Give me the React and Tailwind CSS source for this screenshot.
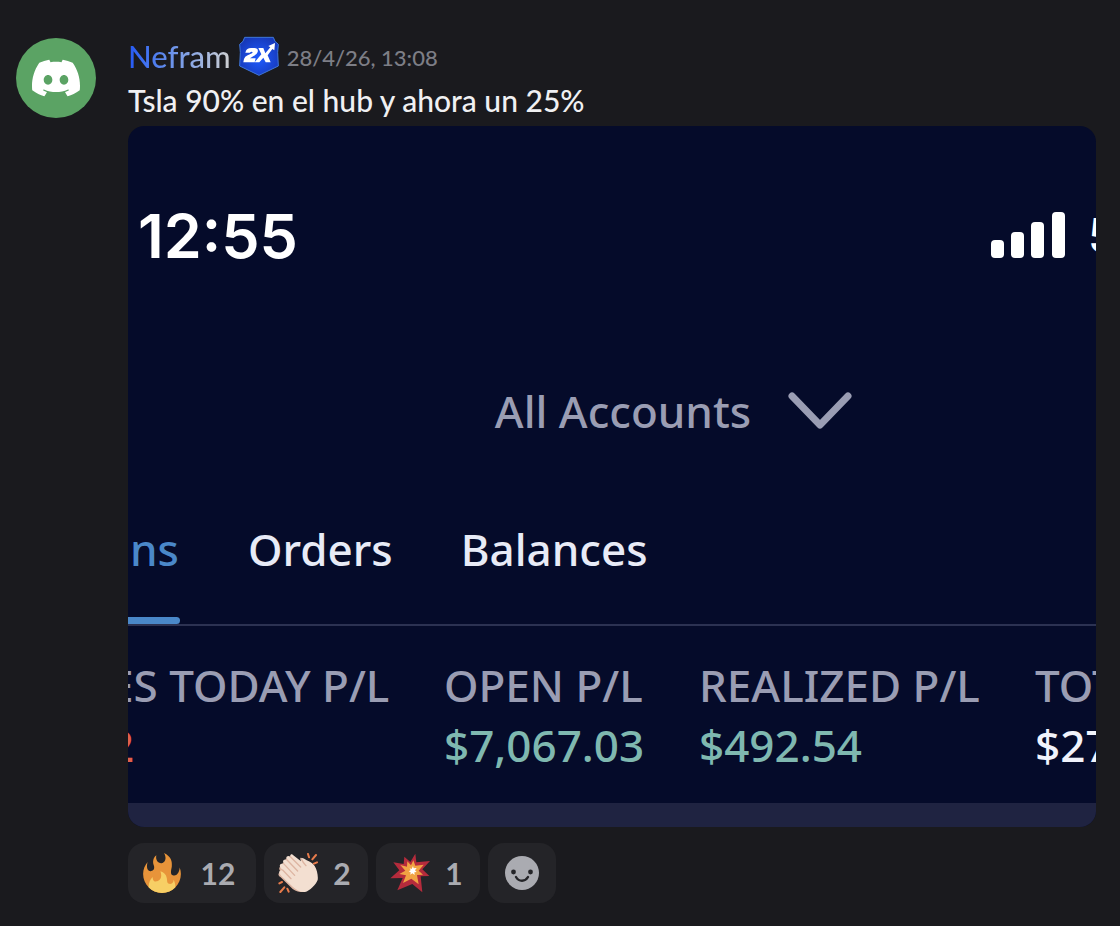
import React from "react";
import { SiDiscord } from "react-icons/si";

const reactions = [
  { name: "fire", count: 12, Icon: FireIcon },
  { name: "clap", count: 2, Icon: ClapIcon },
  { name: "boom", count: 1, Icon: BoomIcon },
];

// Columns of the positions summary
const columns = [
  { label: "ES TODAY P/L", value: "2", color: "text-[#e0604c]", width: "w-[335px]" },
  { label: "OPEN P/L", value: "$7,067.03", color: "text-[#7fb8b0]", width: "w-[255px]" },
  { label: "REALIZED P/L", value: "$492.54", color: "text-[#7fb8b0]", width: "w-[336px]" },
  { label: "TOT", value: "$27", color: "text-[#f1f3fb]", width: "w-[90px]" },
];

function FireIcon() {
  return (
    <svg className="size-10" viewBox="0 0 36 36" aria-hidden="true">
      <path
        fill="#E8943A"
        d="M35 19c0-2.062-.367-4.039-1.04-5.868-.46 5.389-3.333 8.157-6.335 6.868-2.812-1.208-.917-5.917-.777-8.164.236-3.809-.012-8.169-6.931-11.794 2.875 5.5.333 8.917-2.333 9.125-2.958.231-5.667-2.542-4.667-7.042-3.238 2.386-3.332 6.402-2.333 9 1.042 2.708-.042 4.958-2.583 5.208-2.84.28-4.418-3.041-2.963-8.333C2.52 10.965 1 14.805 1 19c0 9.389 7.611 17 17 17s17-7.611 17-17z"
      />
      <path
        fill="#F7CF65"
        d="M28.394 23.999c.148 3.084-2.561 4.293-4.019 3.709-2.106-.843-1.541-2.291-2.083-5.291s-2.625-5.083-5.708-6c2.25 6.333-1.247 8.667-3.08 9.084-1.872.426-3.753-.001-3.968-4.007C7.352 23.668 6 26.676 6 30c0 .368.023.73.055 1.09C9.125 34.124 13.342 36 18 36s8.875-1.876 11.945-4.91c.032-.36.055-.722.055-1.09 0-2.187-.584-4.236-1.606-6.001z"
      />
    </svg>
  );
}

function ClapIcon() {
  return (
    <svg className="size-10" viewBox="0 0 120 120" aria-hidden="true">
      <path
        fill="#DDB5A2"
        d="M3 60c-4 6 0 10 5 13l36 35c12 9 26 10 38 9L60 70 20 50 8 40c-6 5-5 10-1 14z"
      />
      <path
        fill="#F3DFD1"
        d="M44 5c-4-3-9 1-7 6-8-5-15 1-11 9-8-3-14 3-9 11l-6 1c-7 2-7 8-3 12l6 8c-8-2-13 4-9 10 4 7 12 13 20 21l20 19c11 10 23 16 36 15 14-3 33-22 38-36 2-12-2-31-9-42-6-8-15-13-24-17-6-4-13-9-17-6-3 2-1 6 0 9z"
      />
      <path
        stroke="#DDB5A2"
        strokeWidth="4"
        strokeLinecap="round"
        fill="none"
        d="M37 11l31 31M69 16q8 16 15 22M25 19l34 35M16 31l34 36M14 51l25 26"
      />
      <path
        stroke="#E77B4B"
        strokeWidth="6"
        strokeLinecap="round"
        fill="none"
        d="M90 3l3 10M114 6l-11 13M117 28l-9 4M4 91l8-4M7 117l12-14M28 107l4 9"
      />
    </svg>
  );
}

function BoomIcon() {
  return (
    <svg className="size-10" viewBox="0 0 120 120" aria-hidden="true">
      <path
        fill="#B52B3C"
        d="M76 2l3 26 41-4-23 25 21 20-26 1 5 48-30-25-45 19 16-37-37 1 27-24L10 28l31 5 2-22 18 16z"
      />
      <path
        fill="#F1A343"
        d="M70 22l6 16 25-3-15 18 13 12-18 1 5 28-22-17-25 13 9-23-20-4 18-10-15-17 20 5 1-16 11 12z"
      />
      <path
        fill="#FFF"
        d="M69 39l2 7 9-1-5 7 5 5-7 1 1 8-7-5-6 4 1-7-6-3 6-3-3-6 6 2z"
      />
    </svg>
  );
}

function SmileyIcon() {
  return (
    <svg className="size-9" viewBox="0 0 36 36" aria-hidden="true">
      <circle cx="18" cy="18" r="17" fill="#aaabb1" />
      <circle cx="9.5" cy="17" r="2.4" fill="#242428" />
      <circle cx="26.5" cy="17" r="2.4" fill="#242428" />
      <path d="M12 22c3 5 9 5 12 0" stroke="#242428" strokeWidth="2.4" strokeLinecap="round" fill="none" />
    </svg>
  );
}

// Server tag shown beside the author
function TagBadge() {
  return (
    <svg className="h-10 w-10 shrink-0" viewBox="0 0 120 120" role="img" aria-label="2X">
      <defs>
        <radialGradient id="tag" cx="50%" cy="55%" r="60%">
          <stop offset="0" stopColor="#1f5bff" />
          <stop offset="1" stopColor="#1638b8" />
        </radialGradient>
      </defs>
      <path
        d="M17 4h86l5 12 10 9-2 24 2 41-58 28L2 90l2-41-2-24 10-9z"
        fill="url(#tag)"
        stroke="#3f76d8"
        strokeWidth="3"
      />
      <path
        d="M20 47q3-11 16-11h10q13 0 10 12-2 7-11 11L33 67h17l-3 12H13l2-10q2-7 11-11l13-6q4-4-1-5-4 0-5 3H19z"
        fill="#fff"
      />
      <path d="M58 36h15l6 16 15-18-6-4 20-9-2 22-6-4-14 19 9 21H80l-7-14-12 14H47l20-24z" fill="#fff" />
    </svg>
  );
}

function SignalBars() {
  return (
    <svg className="h-12 w-[76px]" viewBox="0 0 76 48" fill="#fff" aria-hidden="true">
      <rect x="1" y="28" width="13" height="18" rx="4" />
      <rect x="21" y="20" width="13" height="26" rx="4" />
      <rect x="41" y="10" width="13" height="36" rx="4" />
      <rect x="62" y="0" width="13" height="46" rx="4" />
    </svg>
  );
}

function Attachment() {
  return (
    <div className="overflow-hidden rounded-2xl bg-[#050b2a] pt-20 font-['Noto_Sans',sans-serif] text-[44px] leading-[60px] font-medium whitespace-nowrap">
      {/* Phone status bar */}
      <div className="flex items-center justify-between pl-2.5 text-white">
        <span className="font-['Inter',sans-serif] text-[61px] font-semibold">12:55</span>
        <div className="flex items-center gap-[22px]">
          <SignalBars />
          <span className="w-2 overflow-hidden font-['Inter',sans-serif] text-[48px] leading-[60px] font-semibold">5</span>
        </div>
      </div>

      {/* Account picker */}
      <button className="mx-auto mt-[115px] flex items-center gap-9 pl-[124px] text-[#9a9db3]">
        All Accounts
        <svg className="h-10 w-[66px]" viewBox="0 0 66 40" fill="none" aria-hidden="true">
          <path d="M5 5l28 29L61 5" stroke="currentColor" strokeWidth="7" strokeLinecap="round" strokeLinejoin="round" />
        </svg>
      </button>

      {/* Tabs */}
      <nav className="mt-[78px] flex gap-[68px] border-b-2 border-[#2c3252] text-[#e8ebf7]">
        <a href="#positions" className="flex flex-col text-[#4a88c9]">
          <span className="pr-px pb-[38px] pl-0.5">ns</span>
          <span className="h-[7px] rounded-r bg-[#4a88c9]" />
        </a>
        <a href="#orders">Orders</a>
        <a href="#balances">Balances</a>
      </nav>

      <table className="mt-[29px] mb-7 -ml-[19px] w-[1016px] table-fixed text-left">
        <thead>
          <tr className="text-[#9a9db3]">
            {columns.map((col) => (
              <th key={col.label} className={`${col.width} p-0 font-medium`}>{col.label}</th>
            ))}
          </tr>
        </thead>
        <tbody>
          <tr>
            {columns.map((col) => (
              <td key={col.label} className={`${col.color} p-0`}>{col.value}</td>
            ))}
          </tr>
        </tbody>
      </table>
      <div className="h-6 bg-[#1f2341]" />
    </div>
  );
}

export default function App() {
  return (
    <div className="min-h-screen bg-[#1a1a1e] pt-9 pr-6 pb-6 pl-4 font-['Lato',sans-serif]">
      <article className="flex gap-8">
        <div className="mt-0.5 flex size-20 shrink-0 items-center justify-center rounded-full bg-[#5ba364]">
          <SiDiscord className="size-12 text-white" aria-hidden="true" />
        </div>
        <div className="min-w-0 flex-1">
          <header className="flex h-10 items-center gap-2">
            <span className="bg-linear-to-r from-[#2457f5] to-[#d0d0d0] bg-clip-text text-[31px] leading-10 font-medium text-transparent">
              Nefram
            </span>
            <TagBadge />
            <time className="pt-1 text-[22px] leading-10 font-medium text-[#7d7e86]">28/4/26, 13:08</time>
          </header>
          <p className="pt-0.5 pb-1 text-[30px] leading-[44px] font-medium text-[#f0f0f2]">
            Tsla 90% en el hub y ahora un 25%
          </p>

          <Attachment />

          <div className="mt-4 flex flex-wrap gap-2">
            {reactions.map(({ name, count, Icon }) => (
              <button
                key={name}
                aria-label={`${name}, ${count}`}
                className={`${count > 9 ? "w-32" : "w-[104px]"} flex h-[60px] items-center gap-2 rounded-2xl bg-[#242428] pr-2.5 pl-3.5 text-[30px] font-bold text-[#aaabb1]`}
              >
                <Icon />
                <span className="flex-1 text-center">{count}</span>
              </button>
            ))}
            <button
              aria-label="Add reaction"
              className="flex h-[60px] w-[68px] items-center justify-center rounded-2xl bg-[#242428]"
            >
              <SmileyIcon />
            </button>
          </div>
        </div>
      </article>
    </div>
  );
}
